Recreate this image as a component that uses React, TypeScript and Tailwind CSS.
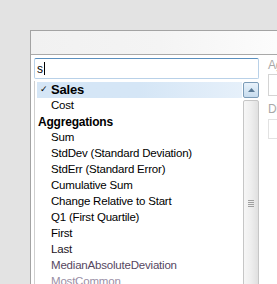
import React from "react";

const items: { label: string; kind: "item" | "header"; selected?: boolean; color?: string }[] = [
    { label: "Sales", kind: "item", selected: true },
    { label: "Cost", kind: "item" },
    { label: "Aggregations", kind: "header" },
    { label: "Sum", kind: "item" },
    { label: "StdDev (Standard Deviation)", kind: "item" },
    { label: "StdErr (Standard Error)", kind: "item" },
    { label: "Cumulative Sum", kind: "item" },
    { label: "Change Relative to Start", kind: "item" },
    { label: "Q1 (First Quartile)", kind: "item" },
    { label: "First", kind: "item" },
    { label: "Last", kind: "item", color: "text-[#1c1424]" },
    { label: "MedianAbsoluteDeviation", kind: "item", color: "text-[#56475f]" },
    { label: "MostCommon", kind: "item", color: "text-[#9a8fa6]" },
];

export default function App() {
    return (
        <div
            className="w-[277px] h-[284px] bg-[#e3e3e3] overflow-hidden pl-[30px] pt-[30px] text-[11.5px] tracking-[-0.2px] text-black"
            style={{ fontFamily: '"Liberation Sans", Arial, sans-serif' }}
        >
            {/* Dialog panel */}
            <div className="w-[260px] h-[260px] border-l border-t border-[#a3a3a3] bg-white relative">
                {/* Header strip */}
                <div className="h-[24px] border-b border-[#a9a9a9] bg-gradient-to-r from-[#f1f1f1] via-[#f4f4f4] to-[#fdfdfd]" />

                {/* Content */}
                <div className="flex bg-[#ffffff] pt-[3px] pl-[3px]">
                    <div className="w-[225px] h-[21px] border border-[#b9d1e8] border-t-[#5a8fbf] rounded-[2px] flex items-center pl-[2px]">
                        <span className="leading-none text-[12px]">s</span>
                        <span className="w-px h-[13px] bg-black ml-px" />
                    </div>
                    <div className="ml-[9px] flex flex-col text-[#a8a8a8] text-[12px]">
                        <span className="leading-[14px]">Ag</span>
                        <div className="mt-[2px] w-[20px] h-[22px] border border-[#d4d4d4] border-r-0" />
                        <span className="mt-[6px] leading-[14px]">Di</span>
                        <div className="mt-[3px] w-[20px] h-[20px] border border-[#e2e2e2] border-r-0" />
                    </div>
                </div>

                {/* Dropdown list */}
                <div className="absolute left-[3px] top-[50px] w-[226px] h-[220px] bg-white border-l border-[#cfcfcf] flex">
                    <div className="flex-1 flex flex-col pt-[1px] pl-[2px]">
                        {items.map((it) =>
                            it.kind === "header" ? (
                                <div key={it.label} className="h-[16px] flex items-center pl-[1px] font-bold text-[12px]">
                                    {it.label}
                                </div>
                            ) : (
                                <div
                                    key={it.label}
                                    className={
                                        it.selected
                                            ? "h-[16px] w-[205px] flex items-center bg-gradient-to-r from-[#d5e6f6] via-[#d5e6f6] to-[#e6f0fa]"
                                            : "h-[16px] flex items-center"
                                    }
                                >
                                    <span className="w-[14px] flex justify-center text-[9px]">
                                        {it.selected ? "✓" : ""}
                                    </span>
                                    <span className={(it.selected ? "font-bold text-[13px] " : "") + (it.color ?? "")}>
                                        {it.label}
                                    </span>
                                </div>
                            )
                        )}
                    </div>

                    {/* Scrollbar */}
                    <div className="w-[16px] flex flex-col pt-[1px] mr-[1px]">
                        <div className="h-[16px] border border-[#7c9cb8] rounded-[2px] bg-gradient-to-b from-[#e8f2fb] to-[#c7dcee] flex items-center justify-center">
                            <svg width="7" height="4" viewBox="0 0 7 4">
                                <path d="M0 4 L3.5 0 L7 4 Z" fill="#5a7a96" />
                            </svg>
                        </div>
                        <div className="mt-[2px] flex-1 border border-[#c6c6c6] rounded-[2px] bg-gradient-to-r from-[#f6f6f6] via-[#eeeeee] to-[#e0e0e0] flex flex-col items-center pt-[99px]">
                            <div className="w-[6px] h-px bg-[#a0a0a0]" />
                            <div className="w-[6px] h-px bg-[#a0a0a0] mt-px" />
                            <div className="w-[6px] h-px bg-[#a0a0a0] mt-px" />
                            <div className="w-[6px] h-px bg-[#a0a0a0] mt-px" />
                        </div>
                    </div>
                </div>
            </div>
        </div>
    );
}
